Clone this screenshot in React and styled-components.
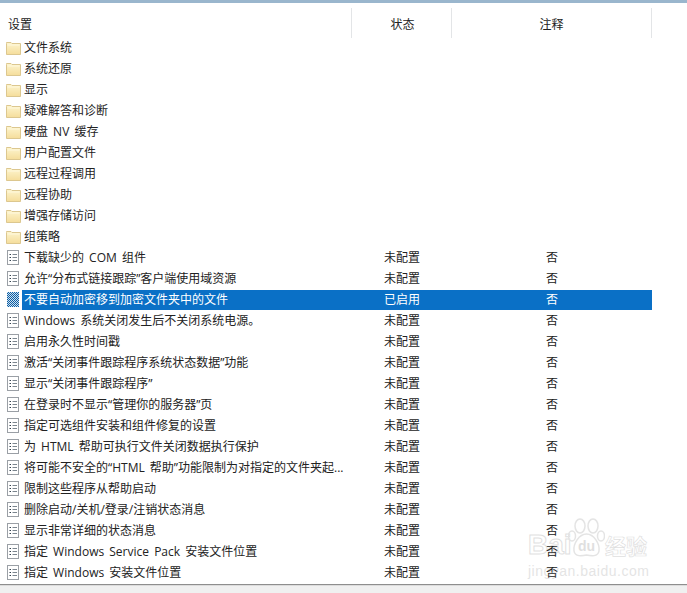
import React from 'react'
import styled, { createGlobalStyle } from 'styled-components'

const GlobalStyle = createGlobalStyle`
  html, body {
    margin: 0;
    padding: 0;
    background: #fff;
  }
  body {
    font-family: 'Open Sans', 'Noto Sans CJK SC', sans-serif;
    font-size: 12px;
    color: #222;
    word-spacing: 2px;
  }
`

const Page = styled.div`
  position: relative;
  width: 687px;
  height: 593px;
  overflow: hidden;
  display: flex;
  flex-direction: column;
  background: #fff;
`

const TopBand = styled.div`
  height: 3px;
  background: #9ab6cd;
`

const Header = styled.div`
  display: grid;
  grid-template-columns: 352px 100px 200px;
  height: 34px;
  padding-top: 5px;
  box-sizing: border-box;
`

const HeaderCell = styled.div`
  height: 30px;
  line-height: 34px;
  font-size: 12px;
  color: #222;
  padding-left: ${(props) => props.$left || 0}px;
  border-right: 1px solid #e3e5e7;
  box-sizing: border-box;
  text-align: ${(props) => (props.$center ? 'center' : 'left')};
`

const List = styled.div`
  display: flex;
  flex-direction: column;
`

const Row = styled.div`
  display: flex;
  height: 21px;
  align-items: center;
`

const IconSlot = styled.div`
  width: 22px;
  padding-left: 6px;
  box-sizing: border-box;
  display: flex;
  flex: none;
`

const RowBody = styled.div`
  display: grid;
  grid-template-columns: 329px 100px 201px;
  height: ${(props) => (props.$selected ? 20 : 21)}px;
  line-height: ${(props) => (props.$selected ? 20 : 21)}px;
  background: ${(props) => (props.$selected ? '#0a70c6' : 'transparent')};
  color: ${(props) => (props.$selected ? '#fff' : '#222')};
`

const NameCell = styled.div`
  padding-left: 2px;
  white-space: nowrap;
  overflow: hidden;
`

const StateCell = styled.div`
  padding-left: 33px;
  white-space: nowrap;
`

const NoteCell = styled.div`
  padding-left: 95px;
  white-space: nowrap;
`

const Footer = styled.div`
  flex: 1;
  margin-top: 1px;
  border-top: 1px solid #8e8e8e;
  box-shadow: inset 0 1px 0 #dcdcdc;
  background: #f0f0f0;
`

const Watermark = styled.div`
  position: absolute;
  left: 528px;
  top: 518px;
  width: 122px;
  height: 60px;
  opacity: 0.26;
  pointer-events: none;
`

const WatermarkTop = styled.div`
  display: flex;
  height: 40px;
  align-items: flex-end;
`

const WatermarkBai = styled.span`
  width: 40px;
  font-family: 'Liberation Sans', sans-serif;
  font-size: 28px;
  font-weight: 700;
  line-height: 26px;
  color: transparent;
  -webkit-text-stroke: 1px #888;
`

const PawSlot = styled.div`
  position: relative;
  width: 37px;
  height: 40px;
  flex: none;
`

const WatermarkDu = styled.span`
  position: absolute;
  left: 10px;
  top: 20px;
  font-family: 'Liberation Sans', sans-serif;
  font-size: 14px;
  font-weight: 700;
  line-height: 16px;
  color: #888;
`

const WatermarkCjk = styled.span`
  font-family: 'Noto Sans CJK SC', sans-serif;
  font-size: 21px;
  line-height: 26px;
  font-weight: 700;
  color: transparent;
  -webkit-text-stroke: 0.7px #888;
  white-space: nowrap;
`

const WatermarkUrl = styled.div`
  margin-top: 6px;
  font-family: 'Liberation Sans', sans-serif;
  font-size: 14px;
  line-height: 14px;
  letter-spacing: 0.5px;
  color: #999;
  white-space: nowrap;
`

const FolderIcon = () => (
  <svg width="15" height="14" viewBox="0 0 15 14">
    <defs>
      <linearGradient id="folderFill" x1="0" y1="0" x2="0" y2="1">
        <stop offset="0" stopColor="#fdf5cf" />
        <stop offset="1" stopColor="#f5dd9b" />
      </linearGradient>
    </defs>
    <path d="M0.5 2.5 L0.5 1.5 L5 1.5 L6 2.5 L14.5 2.5 L14.5 13.5 L0.5 13.5 Z" fill="url(#folderFill)" stroke="#dcc78f" />
    <path d="M1.5 4 L13.5 4" stroke="#fff8dc" />
  </svg>
)

const PolicyIcon = () => (
  <svg width="14" height="15" viewBox="0 0 14 15">
    <rect x="1.5" y="0.5" width="11" height="14" fill="#fff" stroke="#9a9fa5" />
    <path d="M3.5 4.5 H5 M3.5 7.5 H5 M3.5 10.5 H5" stroke="#33414e" />
    <path d="M6.5 4.5 H11 M6.5 7.5 H11 M6.5 10.5 H11" stroke="#7b858e" />
  </svg>
)

// selected policy icon comes out as a blue dither
const SelectedIcon = () => (
  <svg width="14" height="15" viewBox="0 0 14 15">
    <defs>
      <pattern id="dither" width="2" height="2" patternUnits="userSpaceOnUse">
        <rect width="2" height="2" fill="#cfe0ee" />
        <rect width="1" height="1" fill="#0b5ea6" />
        <rect x="1" y="1" width="1" height="1" fill="#0b5ea6" />
      </pattern>
    </defs>
    <rect x="1" y="0" width="12" height="15" fill="url(#dither)" />
  </svg>
)

const PawIcon = () => (
  <svg width="37" height="40" viewBox="0 0 37 40">
    <g fill="none" stroke="#999" strokeWidth="1.5">
      <ellipse cx="12" cy="8" rx="5" ry="7" />
      <ellipse cx="25" cy="8" rx="5" ry="7" />
      <ellipse cx="4" cy="18" rx="3.5" ry="5" />
      <ellipse cx="33" cy="18" rx="3.5" ry="5" />
      <path d="M18.5 16 C11 16 5 26 6 33 C7 39 14 38 18.5 37 C23 38 30 39 31 33 C32 26 26 16 18.5 16 Z" />
    </g>
  </svg>
)

const folders = ['文件系统', '系统还原', '显示', '疑难解答和诊断', '硬盘 NV 缓存', '用户配置文件', '远程过程调用', '远程协助', '增强存储访问', '组策略']

const policies = [
  { name: '下载缺少的 COM 组件' },
  { name: '允许“分布式链接跟踪”客户端使用域资源' },
  { name: '不要自动加密移到加密文件夹中的文件', state: '已启用', selected: true },
  { name: 'Windows 系统关闭发生后不关闭系统电源。' },
  { name: '启用永久性时间戳' },
  { name: '激活“关闭事件跟踪程序系统状态数据”功能' },
  { name: '显示“关闭事件跟踪程序”' },
  { name: '在登录时不显示“管理你的服务器”页' },
  { name: '指定可选组件安装和组件修复的设置' },
  { name: '为 HTML 帮助可执行文件关闭数据执行保护' },
  { name: '将可能不安全的“HTML 帮助”功能限制为对指定的文件夹起...' },
  { name: '限制这些程序从帮助启动' },
  { name: '删除启动/关机/登录/注销状态消息' },
  { name: '显示非常详细的状态消息' },
  { name: '指定 Windows Service Pack 安装文件位置' },
  { name: '指定 Windows 安装文件位置' },
]

export default function App() {
  return (
    <Page>
      <GlobalStyle />
      <TopBand />
      <Header>
        <HeaderCell $left={8}>设置</HeaderCell>
        <HeaderCell $center $left={2}>状态</HeaderCell>
        <HeaderCell $center>注释</HeaderCell>
      </Header>
      <List>
        {folders.map((name) => (
          <Row key={name}>
            <IconSlot><FolderIcon /></IconSlot>
            <RowBody><NameCell>{name}</NameCell></RowBody>
          </Row>
        ))}
        {policies.map((item) => (
          <Row key={item.name}>
            <IconSlot>{item.selected ? <SelectedIcon /> : <PolicyIcon />}</IconSlot>
            <RowBody $selected={item.selected}>
              <NameCell>{item.name}</NameCell>
              <StateCell>{item.state || '未配置'}</StateCell>
              <NoteCell>否</NoteCell>
            </RowBody>
          </Row>
        ))}
      </List>
      <Footer />
      <Watermark>
        <WatermarkTop>
          <WatermarkBai>Bai</WatermarkBai>
          <PawSlot>
            <PawIcon />
            <WatermarkDu>du</WatermarkDu>
          </PawSlot>
          <WatermarkCjk>经验</WatermarkCjk>
        </WatermarkTop>
        <WatermarkUrl>jingyan.baidu.com</WatermarkUrl>
      </Watermark>
    </Page>
  )
}
